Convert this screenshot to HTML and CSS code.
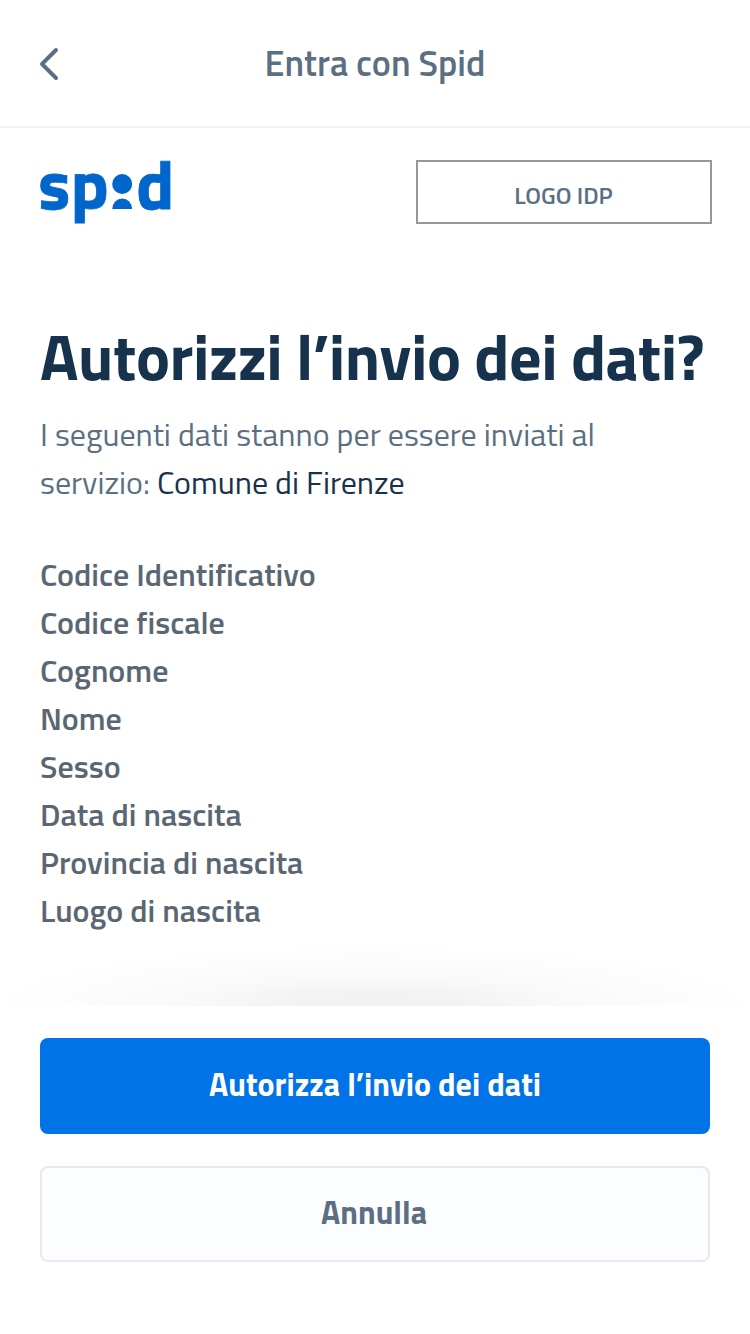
FILE: index.html
```html
<!DOCTYPE html>
<html lang="it">
<head>
<meta charset="utf-8">
<title>Entra con Spid</title>
<link rel="stylesheet" href="styles.css">
</head>
<body>
<div class="screen">
  <header class="topbar">
    <button class="back" aria-label="Indietro">
      <svg width="20" height="34" viewBox="0 0 20 34"><path d="M17 3 L3 17 L17 31"/></svg>
    </button>
    <h2 class="topbar-title">Entra con Spid</h2>
  </header>
  <main class="content">
    <div class="logos">
      <svg class="spid" width="134" height="66" viewBox="0 0 134 66" role="img" aria-label="spid">
        <text x="-1.8" y="48.8" textLength="32" lengthAdjust="spacingAndGlyphs">s</text>
        <text x="30.8" y="48.8" textLength="38" lengthAdjust="spacingAndGlyphs">p</text>
        <circle cx="82.2" cy="24" r="10"/>
        <path d="M72.3 49 A9.9 10.6 0 0 1 92.1 49 Z"/>
        <text x="96.3" y="48.8" textLength="38" lengthAdjust="spacingAndGlyphs">d</text>
      </svg>
      <div class="idp">LOGO IDP</div>
    </div>
    <h1 class="heading">Autorizzi l’invio dei dati?</h1>
    <p class="intro">I seguenti dati stanno per essere inviati al<br>servizio: <span class="entity">Comune di Firenze</span></p>
    <ul class="fields">
      <li>Codice Identificativo</li>
      <li>Codice fiscale</li>
      <li>Cognome</li>
      <li>Nome</li>
      <li>Sesso</li>
      <li>Data di nascita</li>
      <li>Provincia di nascita</li>
      <li>Luogo di nascita</li>
    </ul>
  </main>
  <div class="fade"></div>
  <footer class="actions">
    <button class="btn primary">Autorizza l’invio dei dati</button>
    <button class="btn secondary">Annulla</button>
  </footer>
</div>
</body>
</html>
```

FILE: styles.css
```css
* { box-sizing: border-box; margin: 0; padding: 0; }
body { background: #fff; font-family: "Titillium Web", Roboto, "Noto Sans", sans-serif; color: #5c6f82; }
button { font-family: inherit; cursor: pointer; }
.screen { width: 750px; height: 1334px; display: flex; flex-direction: column; overflow: hidden; }

.topbar { height: 128px; flex: none; border-bottom: 2px solid #f0f4fa; display: grid; grid-template-columns: 60px 1fr 60px; align-items: center; }
.back { display: flex; margin: 2px 0 0 39px; border: 0; background: none; width: 20px; height: 34px; }
.back path { fill: none; stroke: #5c6f82; stroke-width: 4; stroke-linecap: round; stroke-linejoin: round; }
.topbar-title { text-align: center; font-size: 36px; font-weight: 600; line-height: 56px; white-space: nowrap; }

.content { height: 820px; flex: none; padding: 32px 38px 0 40px; }
.logos { display: flex; justify-content: space-between; height: 66px; }
.spid { fill: #06c; overflow: visible; }
.spid text { font: 700 69px "Titillium Web", "Noto Sans", sans-serif; stroke: #06c; stroke-width: 0.8; }
.idp { width: 296px; height: 64px; border: 2px solid #979797; display: flex; justify-content: center; padding: 4px 1px 0 0; font-size: 24px; font-weight: 600; line-height: 58px; }

.heading { margin-top: 90px; font-size: 64px; line-height: 80px; font-weight: 700; letter-spacing: -0.43px; color: #17324d; white-space: nowrap; }
.intro { margin-top: 14px; font-size: 32px; line-height: 48px; font-weight: 400; white-space: nowrap; }
.entity { color: #17324d; }
.fields { list-style: none; margin-top: 44px; font-size: 32px; line-height: 48px; font-weight: 600; color: #5a6772; }

.fade { height: 58px; flex: none; background: radial-gradient(ellipse 370px 58px at 50% 100%, #f0f0f0 0%, #f3f3f3 25%, #f9f9f9 50%, #fcfcfc 75%, #fefefe 99%, #fff 100%); }

.actions { padding: 32px 40px; display: flex; flex-direction: column; gap: 32px; }
.btn { height: 96px; border-radius: 8px; font-size: 32px; font-weight: 700; line-height: 48px; padding-bottom: 4px; }
.primary { background: #0073e6; border: 0; color: #fff; }
.secondary { background: #fcfdff; border: 2px solid #e6e9f2; color: #5c6f82; padding-right: 2px; }
```
